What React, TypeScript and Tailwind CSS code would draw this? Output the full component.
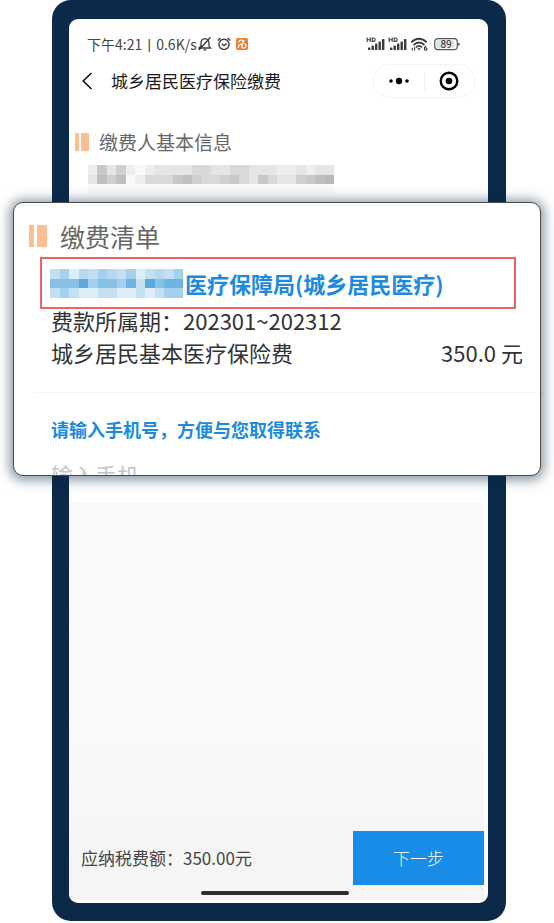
import React from 'react';

interface MosaicProps {
  rows: string[];
  palette: Record<string, string>;
  className: string;
}

// Grey blocks that cover the payer's name and id number
const PAYER_ROWS = [
  'bfcebabccccddccddcccbbcbcc',
  'cgegabdddfgeddefdcfdccefgh',
  'aaaaaaaaaaaaaaaaaaaaaaaaaa'
];

const GREY_PALETTE: Record<string, string> = {
  a: '#f9f9f9',
  b: '#eeeeee',
  c: '#e5e5e5',
  d: '#d9d9d9',
  e: '#cfcfcf',
  f: '#c8c8c8',
  g: '#bfbfbf',
  h: '#b9b9b9'
};

// Blue blocks in front of the bureau name
const BUREAU_ROWS = [
  'bdacbdcbdabcbd',
  'eeegdeedfbgeff',
  'bdbaabbaababdd'
];

const BLUE_PALETTE: Record<string, string> = {
  a: '#dcedf7',
  b: '#c3e0f2',
  c: '#b5d9f0',
  d: '#a3d0ec',
  e: '#88c1e6',
  f: '#6eb4e3',
  g: '#57a9df'
};

const Mosaic: React.FC<MosaicProps> = ({ rows, palette, className }) => (
  <svg
    className={className}
    viewBox={`0 0 ${rows[0].length} ${rows.length}`}
    preserveAspectRatio="none"
    shapeRendering="crispEdges"
    aria-hidden="true"
  >
    {rows.map((row, y) =>
      row.split('').map((cell, x) => (
        <rect key={`${x}-${y}`} x={x} y={y} width="1" height="1" fill={palette[cell]} />
      ))
    )}
  </svg>
);

const SignalIcon: React.FC = () => (
  <svg className="h-4 w-5" viewBox="0 0 20 16" fill="#3c3c3c" aria-hidden="true">
    <path d="M1.2 1.5v4.400M4.200 1.500v4.400M1.200 3.700h3M6.200 2v3.400h1q2 0 2-1.700T7.200 2z" fill="none" stroke="#3c3c3c" strokeWidth="1.1" />
    <rect x="2" y="11.5" width="2.4" height="2.5" rx="0.5" />
    <rect x="5.5" y="9.5" width="2.4" height="4.5" rx="0.5" />
    <rect x="9" y="7.5" width="2.4" height="6.5" rx="0.5" />
    <rect x="12.5" y="5.5" width="2.4" height="8.5" rx="0.5" />
    <rect x="16" y="3" width="2.4" height="11" rx="0.5" />
  </svg>
);

const WifiIcon: React.FC = () => (
  <svg className="h-4 w-[18px]" viewBox="0 0 18 16" fill="none" stroke="#3c3c3c" strokeWidth="1.8" aria-hidden="true">
    <path d="M1.300 6.300Q9-.7 16.700 6.300M3.600 9Q9 4 14.400 9M6 11.400Q9 8.400 12 11.400" />
    <path d="M7.200 12.200h3.600L9 14.400z" fill="#3c3c3c" stroke="none" />
    <path d="M2.300 12v2.500M4.600 11v3.500" strokeWidth="1.1" />
    <path d="M16 10q-1.800 1.300-1.600 3" strokeWidth="1.1" />
    <circle cx="15.700" cy="13" r="1.300" strokeWidth="1.1" />
  </svg>
);

const BatteryIcon: React.FC = () => (
  <svg className="ml-1 h-4 w-[26px]" viewBox="0 0 26 16" aria-label="89%">
    <rect x="0.7" y="2.700" width="22.600" height="11" rx="3.500" fill="none" stroke="#555" strokeWidth="1.2" />
    <rect x="2.200" y="4.200" width="18" height="8" rx="2" fill="#e2e2e2" />
    <path d="M24.800 7v2.600" stroke="#555" strokeWidth="1.5" />
    <text x="12" y="12" textAnchor="middle" fontSize="10" fontFamily="Roboto, sans-serif" fill="#333">89</text>
  </svg>
);

const MuteIcon: React.FC = () => (
  <svg className="ml-px h-4 w-[14px]" viewBox="0 0 14 16" fill="none" stroke="#3c3c3c" strokeWidth="1.3" aria-hidden="true">
    <path d="M1 12h11.500l-1.600-2.200V6.500Q10.700 3 7 2.600 3.200 3 3 6.500v3.300zM5.500 13.800h3M12.500 1.200L1 14" />
  </svg>
);

const AlarmIcon: React.FC = () => (
  <svg className="ml-[5px] h-4 w-[14px]" viewBox="0 0 14 16" fill="none" stroke="#3c3c3c" strokeWidth="1.4" aria-hidden="true">
    <circle cx="7" cy="8.300" r="5.100" />
    <path d="M.8 4.500L3.600 2M13.200 4.500L10.400 2M4.800 7.800L7 9.700l2.600-2.100" />
  </svg>
);

const AppIcon: React.FC = () => (
  <svg className="ml-[5px] h-4 w-3" viewBox="0 0 12 16" aria-hidden="true">
    <rect y="2" width="12" height="12" rx="2" fill="#f47b2a" />
    <path d="M2.500 6.500Q3 4 5 4t2 2-2 2.200L2.500 9.500V12M7 6l1.500-2M6 9.500q0-2 2-2t2 2.200T7.500 12Q5.500 12 6 9.500" fill="none" stroke="#fff" strokeWidth="1.2" />
  </svg>
);

const StatusBar: React.FC = () => (
  <div className="flex h-[18px] items-center justify-between pl-[18px] pr-7 text-[#444]">
    <div className="flex items-center">
      <span className="whitespace-nowrap text-[14px] leading-[18px]">下午4:21丨0.6K/s</span>
      <MuteIcon />
      <AlarmIcon />
      <AppIcon />
    </div>
    <div className="flex items-center gap-[2px]">
      <SignalIcon />
      <SignalIcon />
      <WifiIcon />
      <BatteryIcon />
    </div>
  </div>
);

const NavBar: React.FC = () => (
  <header className="mt-[11px] flex h-[34px] items-center pl-3 pr-[13px]">
    <button aria-label="返回" className="flex w-[30px] items-center">
      <svg className="h-5 w-3" viewBox="0 0 12 20" fill="none" stroke="#111" strokeWidth="1.6" aria-hidden="true">
        <path d="M10.500 2L2.200 10l8.300 8" />
      </svg>
    </button>
    <h1 className="flex-1 text-[17px] leading-6 text-[#1a1a1a]">城乡居民医疗保险缴费</h1>
    <div className="flex h-[34px] w-[102px] items-center rounded-full border border-[#f3f3f3]">
      <button aria-label="更多" className="flex flex-1 justify-center border-r border-[#f0f0f0] py-[2px]">
        <svg className="h-4 w-5" viewBox="0 0 20 16" aria-hidden="true">
          <circle cx="2" cy="8" r="1.8" />
          <circle cx="10" cy="8" r="3.2" />
          <circle cx="18" cy="8" r="1.8" />
        </svg>
      </button>
      <button aria-label="关闭" className="flex flex-1 justify-center">
        <svg className="h-5 w-5" viewBox="0 0 20 20" aria-hidden="true">
          <circle cx="10" cy="10" r="8.3" fill="none" stroke="#000" strokeWidth="2.4" />
          <circle cx="10" cy="10" r="3.300" />
        </svg>
      </button>
    </div>
  </header>
);

const BillCard: React.FC = () => (
  <section className="absolute inset-x-[13px] top-[202px] overflow-hidden rounded-[10px] border border-[#4a4a4a] bg-white pt-[17px] shadow-[0_1px_12px_3px_rgba(10,40,70,0.5)]">
    <div className="flex h-8 items-center gap-[13px] pl-[15px]">
      <div className="flex h-[22px] gap-[3px]">
        <span className="w-[5px] bg-[#ffbe92]" />
        <span className="w-[10px] bg-[#ffbe92]" />
      </div>
      <h2 className="text-[25px] leading-8 text-[#666]">缴费清单</h2>
    </div>

    <div className="ml-[26px] mr-6 mt-[5px] flex h-[52px] items-center border-2 border-[#ee6262] pl-2">
      <Mosaic rows={BUREAU_ROWS} palette={BLUE_PALETTE} className="mr-[2px] h-[29px] w-[133px]" />
      <strong className="whitespace-nowrap text-[22px] font-bold leading-8 text-[#1b8ae0]">
        医疗保障局(城乡居民医疗)
      </strong>
    </div>

    <div className="flex flex-col gap-[9px] pl-[37px] pr-[17px] text-[22px] leading-[23px] text-[#333]">
      <p>费款所属期：202301~202312</p>
      <div className="flex justify-between">
        <span>城乡居民基本医疗保险费</span>
        <span>350.0 元</span>
      </div>
    </div>

    <div className="ml-[19px] mt-7 border-t border-[#f6f6f6] pl-[18px] pt-[22px]">
      <label htmlFor="phone" className="block text-[18px] font-bold leading-7 text-[#1b8ae0]">
        请输入手机号，方便与您取得联系
      </label>
      <div className="mt-4 h-4 overflow-hidden">
        <input
          id="phone"
          type="tel"
          placeholder="输入手机"
          className="block h-[30px] w-full text-[22px] leading-[30px] outline-none placeholder:text-[#c4c4c4]"
        />
      </div>
    </div>
  </section>
);

const App: React.FC = () => {
  return (
    <div className="relative flex min-h-screen flex-col bg-white pb-[2px] pl-[52px] pr-12 font-['Noto_Sans_CJK_SC',sans-serif]">
      <div className="flex flex-1 flex-col rounded-[19px] bg-[#0b2948] pb-[18px] pl-[17px] pr-[18px] pt-[19px]">
        <div className="flex flex-1 flex-col overflow-hidden rounded-[9px] bg-white pb-[3px] pt-4">
          <StatusBar />
          <NavBar />

          {/* Payer info, the lower part lies under the bill card */}
          <section className="pb-[309px] pt-[30px]">
            <div className="flex h-7 items-center gap-[10px] pl-[6px]">
              <div className="flex h-[18px] gap-[2px]">
                <span className="w-1 bg-[#ffbe92]" />
                <span className="w-2 bg-[#ffbe92]" />
              </div>
              <h2 className="text-[19px] leading-7 text-[#666]">缴费人基本信息</h2>
            </div>
            <Mosaic rows={PAYER_ROWS} palette={GREY_PALETTE} className="ml-[19px] mt-[9px] h-[29px] w-[246px]" />
          </section>

          <div className="mr-1 flex flex-1 flex-col justify-end bg-linear-to-b from-[#f9f9f9] via-[#fafafa] to-[#f5f5f5]">
            <footer className="flex h-[54px] items-center justify-between pl-3">
              <p className="text-[17px] leading-6 text-[#444]">应纳税费额：350.00元</p>
              <button className="h-full w-[131px] bg-[#188ce6] text-[17px] font-light text-white">下一步</button>
            </footer>
            <div className="mb-[5px] mr-1 mt-[6px] h-1 w-[148px] self-center rounded-full bg-[#2e2e2e]" />
          </div>
        </div>
      </div>

      <BillCard />
    </div>
  );
};

export default App;
